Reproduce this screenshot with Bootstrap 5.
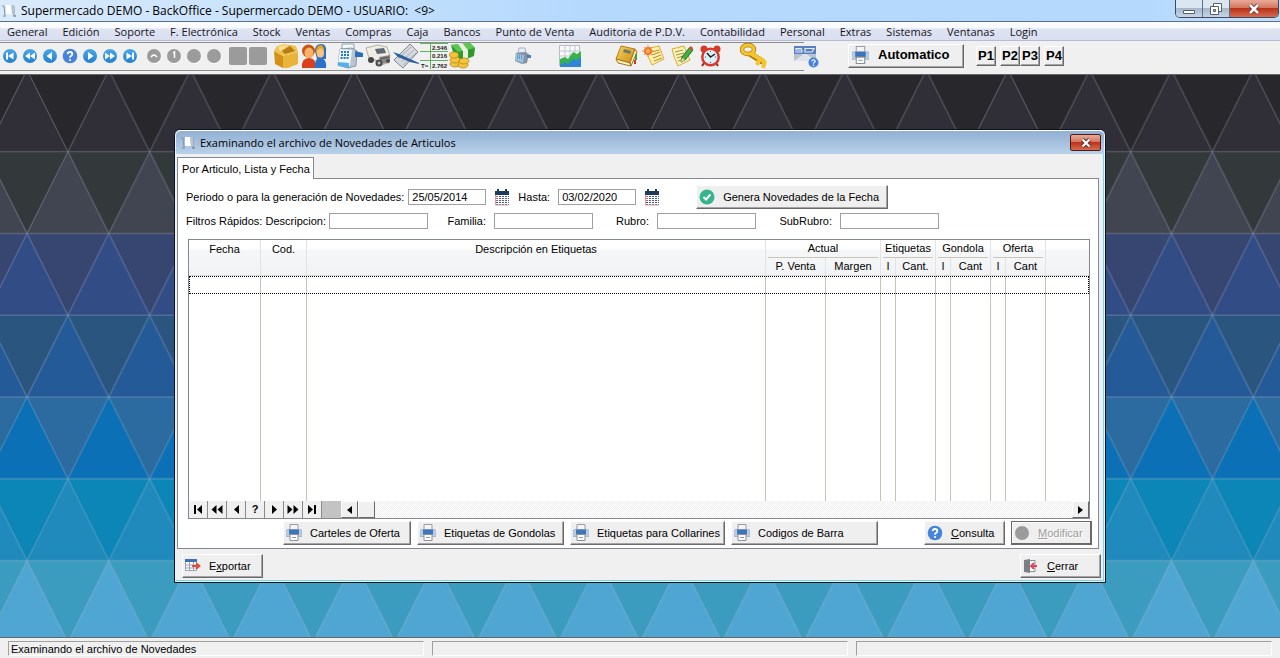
<!DOCTYPE html>
<html lang="es">
<head>
<meta charset="utf-8">
<meta name="viewport" content="width=device-width, initial-scale=1">
<title>Supermercado DEMO - BackOffice</title>
<link href="https://cdn.jsdelivr.net/npm/bootstrap@5.3.0/dist/css/bootstrap.min.css" rel="stylesheet">
<style>
  body { font-family: "Liberation Sans", Arial, sans-serif; font-size: 11px; line-height: 16px; color: #000; background: #f0f0f0; }
  svg { display: block; flex-shrink: 0; }
  button { font: inherit; color: inherit; }
  .segoe { font-family: "Open Sans", "Noto Sans", sans-serif; font-size: 12px; }
  .segoe.tight { font-size: 11px; }

  .app-title { height: 22px; background: linear-gradient(90deg, #d9eafb, #b5d9fd 45%, #b5d9fd 90%, #c4dff8); border-bottom: 1px solid #5b6f86; padding-left: 1px; }
  .win-btns { height: 18px; border: 1px solid #3c4a5c; border-top: 0; border-radius: 0 0 5px 5px; overflow: hidden; margin-right: 1px; }
  .win-btns button { border: 0; border-right: 1px solid #5f7187; padding: 0; width: 27px; background: linear-gradient(#dbe6f1 45%, #a7b8ca 50%, #c4d6e8); display: flex; align-items: center; justify-content: center; }
  .win-btns .x-close { width: 48px; border: 0; }
  .x-close { background: linear-gradient(#e6a595 5%, #d4765f 45%, #b93319 50%, #d86a50) !important; }

  .app-menu { height: 19px; gap: 15px; padding-left: 7px; background: linear-gradient(#f9fbfe 30%, #dfe4f2 40%, #dadff1); border-bottom: 1px solid #b7bdd0; white-space: nowrap; overflow: hidden; }
  .app-menu a { color: #15151c; text-decoration: none; line-height: 19px; }

  .app-tools { height: 34px; padding: 1px 0 5px; border-bottom: 1px solid #666;
    background: linear-gradient(#8c8c8c, #8c8c8c) 0 1px / 804px 1px no-repeat, linear-gradient(#8c8c8c, #8c8c8c) 0 29px / 804px 1px no-repeat, #f0f0f0; }
  .tool { border: 0; background: none; padding: 0; width: 28px; height: 27px; display: flex; align-items: center; justify-content: center; flex-shrink: 0; }
  .tool.slim { width: 20px; }

  .bevel { border: 1px solid; border-color: #fff #696969 #696969 #fff; box-shadow: inset -1px -1px #a5a5a5; background: #efefef; height: 24px; padding: 0 2px 1px; display: flex; align-items: center; gap: 8px; white-space: nowrap; color: #000; }
  .bevel:disabled { border-color: #696969; box-shadow: inset -1px -1px #696969, inset 1px 1px #fff; color: #9c9c9c; text-shadow: 1px 1px #fff; }
  .bevel.auto { width: 116px; font-size: 13px; font-weight: bold; padding-left: 3px; }
  .bevel.auto svg { margin-right: 1px; }
  .bevel.pkey { width: 20px; height: 20px; font-size: 13px; font-weight: bold; justify-content: center; padding: 0; }
  .w-a { width: 81px; } .w-b { width: 128px; } .w-c { width: 147px; } .w-d { width: 155px; } .w-e { width: 192px; margin-left: 28px; }

  .desktop { padding: 54px 174px; }
  .dlg { border: 1px solid #0c1420; border-radius: 6px 6px 0 0; background: #f0f0f0; box-shadow: inset 0 0 0 1px #eaf4fd, inset -1px -1px 0 1px #6fd7ee; padding: 0 2px 4px; }
  .dlg-title { height: 24px; margin: 0 -1px; padding: 0 3px 0 4px; border-radius: 5px 5px 0 0; border-top: 1px solid #fff; background: linear-gradient(#92b0d2, #b9d1ea); }
  .dlg-title .x-close { width: 31px; height: 17px; border: 1px solid #4e1b18; border-radius: 2px; padding: 0; display: flex; align-items: center; justify-content: center; }
  .tab-head { height: 22px; margin-top: 3px; padding: 0 3px 0 4px; border: 1px solid #828790; border-bottom: 0; background: #fff; line-height: 22px; position: relative; margin-bottom: -1px; display: inline-block; color: #000; text-decoration: none; vertical-align: top; }
  .pane { border: 1px solid #828790; background: #fff; padding: 6px 6px 3px 8px; margin-right: 4px; }
  .box { border: 1px solid #a0a0a0; border-radius: 0; background: #fff; height: 16px; padding: 0 3px; font: inherit; width: 99px; color: #000; }
  .box.day { width: 78px; }
  .icon-btn { border: 0; padding: 0; background: none; }
  .filters { display: grid; grid-template-columns: 143px 99px 66px 99px 64px 99px 84px 99px; align-items: center; }
  .filters label ~ label { text-align: right; padding-right: 8px; }

  .grid-box { border: 1px solid #828790; margin: 10px 2px 0; }
  .grid-tab { table-layout: fixed; width: 100%; border-collapse: separate; border-spacing: 0; }
  .grid-tab th { font-weight: normal; text-align: center; padding: 0; line-height: 18px; vertical-align: top; border-right: 1px solid #e2e3e6; white-space: nowrap; overflow: hidden; }
  .grid-tab th[aria-label] { border-right: 0; }
  .grid-tab thead { background: linear-gradient(#fff 25%, #f6f7f9 28%, #f1f2f4); }
  .grid-tab thead span { display: block; margin: 0 2px; line-height: 17px; border-bottom: 1px solid #c9c6b8; }
  .grid-tab thead tr:last-child th { border-bottom: 1px solid #d5d5d5; line-height: 17px; height: 18px; }
  .grid-tab thead th[rowspan] { border-bottom: 1px solid #d5d5d5; }
  .grid-tab td { padding: 0; border-right: 1px solid #c6c3b6; }
  .grid-tab td:last-child { border-right: 0; }
  .cur-row td { height: 18px; }
  .cur-row { outline: 1px dotted #000; outline-offset: -1px; }
  .void-row td { height: 207px; }
  .navrow { height: 17px; }
  .navrow button { width: 19px; border: 0; border-right: 1px solid #8a8a8a; background: #f0f0f0; padding: 0; display: flex; align-items: center; justify-content: center; font-weight: bold; line-height: 17px; }
  .navrow .sb { width: 17px; border: 1px solid; border-color: #fff #696969 #696969 #fff; }
  .navrow .gap-gray { width: 19px; background: #c3c3c3; }
  .navrow .track { background: repeating-conic-gradient(#fff 0 25%, #efefef 0 50%) 0 0 / 2px 2px; }
  .actions { gap: 6px; margin-top: 2px; }
  .dlg-foot { padding: 5px 2px 0 5px; }

  .stat { padding: 3px 8px 2px; gap: 8px; border-top: 1px solid #666; height: 21px; }
  .stat div { flex: 1 1 0; height: 15px; line-height: 14px; padding-left: 2px; border: 1px solid; border-color: #a0a0a0 #fff #fff #a0a0a0; white-space: nowrap; }
</style>
</head>
<body class="min-vh-100 d-flex flex-column">

<svg width="0" height="0" class="position-absolute" aria-hidden="true">
  <defs>
    <linearGradient id="blu" x1="0" y1="0" x2="0" y2="1"><stop offset="0" stop-color="#4aa8e8"/><stop offset="1" stop-color="#1f7fd0"/></linearGradient>
    <linearGradient id="gld" x1="0" y1="0" x2="1" y2="1"><stop offset="0" stop-color="#f8d765"/><stop offset="1" stop-color="#c98a10"/></linearGradient>
    <symbol id="cart" viewBox="0 0 16 16"><path d="M1 3h2l1 9M13 3v10h2" fill="none" stroke="#8592a0"/><path d="M5 2h5l1 9H5z" fill="#fff"/><path d="M10 2h3v9h-2z" fill="#b9c4d1"/><path d="M2 13h3M12 13h3" stroke="#76828f"/></symbol>
    <symbol id="print" viewBox="1 .5 16 17"><path d="M5 1h8v5H5z" fill="#f4f4f4" stroke="#9a9fa6"/><path d="M1 8q0-2 2-2h12q2 0 2 2v5H1z" fill="#b9cce4" stroke="#a8b8cc"/><path d="M4 6h10v5H4z" fill="#3d75ba"/><path d="M5 11h8v6H5z" fill="#fff" stroke="#8b9097"/><path d="M7 14h4" stroke="#999"/></symbol>
    <symbol id="cal" viewBox="0 0 16 17"><path d="M1 2h14v4H1z" fill="#1b3a5c"/><path d="M4 0v3M12 0v3" stroke="#1b3a5c" stroke-width="2"/><path d="M1 6h14v10H1z" fill="#fff"/><path d="M2 7.500h13M2 9.500h13M2 11.500h13M2 13.500h13M2 15.500h13" stroke="#4c5f80" stroke-dasharray="2 1"/><path d="M1.500 6v10h13" fill="none" stroke="#d9a0a8"/><path d="M2 7.500h2M2 9.500h2M2 11.500h2" stroke="#cf5a68"/></symbol>
    <symbol id="help" viewBox="0 0 16 16"><circle cx="8" cy="8" r="7.300" fill="#4683dc"/><path d="M5.600 6.200Q5.800 4 8 4t2.300 2Q10.300 7.200 9 8T8 9.700" fill="none" stroke="#fff" stroke-width="1.800"/><circle cx="8" cy="12" r="1.100" fill="#fff"/></symbol>
  </defs>
</svg>

<header class="app-title d-flex align-items-center segoe">
  <svg width="16" height="16"><use href="#cart"/></svg>
  <span class="ms-1 flex-grow-1 text-nowrap">Supermercado DEMO - BackOffice - Supermercado DEMO - USUARIO: &nbsp;&lt;9&gt;</span>
  <div class="win-btns d-flex align-self-start">
    <button type="button" aria-label="Minimizar"><svg width="14" height="14"><path d="M1.500 8.500h11v3h-11z" fill="#fff" stroke="#555f6e"/></svg></button>
    <button type="button" aria-label="Restaurar"><svg width="14" height="14"><path d="M4.500 1.500h8v8h-8z" fill="#fff" stroke="#555f6e"/><path d="M1.500 4.500h8v8h-8z" fill="#fff" stroke="#555f6e"/><path d="M4.500 7.500h2v2h-2z" fill="#a7b8ca" stroke="#555f6e"/></svg></button>
    <button type="button" class="x-close" aria-label="Cerrar ventana"><svg width="14" height="12"><path d="M3 2l8 8M11 2l-8 8" stroke="#5b2a2a" stroke-width="4"/><path d="M3 2l8 8M11 2l-8 8" stroke="#fff" stroke-width="2.500"/></svg></button>
  </div>
</header>

<nav class="app-menu d-flex segoe tight">
  <a href="#">General</a><a href="#">Edición</a><a href="#">Soporte</a><a href="#">F. Electrónica</a><a href="#">Stock</a><a href="#">Ventas</a><a href="#">Compras</a><a href="#">Caja</a><a href="#">Bancos</a><a href="#">Punto de Venta</a><a href="#">Auditoria de P.D.V.</a><a href="#">Contabilidad</a><a href="#">Personal</a><a href="#">Extras</a><a href="#">Sistemas</a><a href="#">Ventanas</a><a href="#">Login</a>
</nav>

<div class="app-tools d-flex align-items-center" role="toolbar" aria-label="Herramientas">
  <button type="button" class="tool slim" aria-label="Primero"><svg width="16" height="16"><circle cx="8" cy="8" r="7" fill="url(#blu)"/><path d="M4 4.500h2v7H4zM11.500 4.500v7L6 8z" fill="#fff"/></svg></button>
  <button type="button" class="tool slim" aria-label="Página anterior"><svg width="16" height="16"><circle cx="8" cy="8" r="7" fill="url(#blu)"/><path d="M8 4.500v7L3 8zM13 4.500v7L8 8z" fill="#fff"/></svg></button>
  <button type="button" class="tool slim" aria-label="Anterior"><svg width="16" height="16"><circle cx="8" cy="8" r="7" fill="url(#blu)"/><path d="M10 4v8L4.500 8z" fill="#fff"/></svg></button>
  <button type="button" class="tool slim" aria-label="Ayuda"><svg width="16" height="16"><use href="#help"/></svg></button>
  <button type="button" class="tool slim" aria-label="Siguiente"><svg width="16" height="16"><circle cx="8" cy="8" r="7" fill="url(#blu)"/><path d="M6 4v8l5.500-4z" fill="#fff"/></svg></button>
  <button type="button" class="tool slim" aria-label="Página siguiente"><svg width="16" height="16"><circle cx="8" cy="8" r="7" fill="url(#blu)"/><path d="M8 4.500v7L13 8zM3 4.500v7L8 8z" fill="#fff"/></svg></button>
  <button type="button" class="tool slim" aria-label="Último"><svg width="16" height="16"><circle cx="8" cy="8" r="7" fill="url(#blu)"/><path d="M10 4.500h2v7h-2zM4.500 4.500v7L10 8z" fill="#fff"/></svg></button>
  <button type="button" class="tool slim ms-1" aria-label="Insertar"><svg width="16" height="16"><circle cx="8.800" cy="8.800" r="7" fill="#fff"/><circle cx="8" cy="8" r="7" fill="#9b9b9b"/><path d="M5 9q3-4 6 0" fill="none" stroke="#fff" stroke-width="1.500"/></svg></button>
  <button type="button" class="tool slim" aria-label="Cambiar"><svg width="16" height="16"><circle cx="8.800" cy="8.800" r="7" fill="#fff"/><circle cx="8" cy="8" r="7" fill="#9b9b9b"/><path d="M7 5l1.500-1v6" fill="none" stroke="#fff" stroke-width="1.500"/></svg></button>
  <button type="button" class="tool slim" aria-label="Borrar"><svg width="16" height="16"><circle cx="8.800" cy="8.800" r="7" fill="#fff"/><circle cx="8" cy="8" r="7" fill="#9b9b9b"/></svg></button>
  <button type="button" class="tool slim" aria-label="Deshacer"><svg width="16" height="16"><circle cx="8.800" cy="8.800" r="7" fill="#fff"/><circle cx="8" cy="8" r="7" fill="#9b9b9b"/></svg></button>
  <button type="button" class="tool slim ms-1" aria-label="Guardar"><svg width="18" height="18"><rect width="18" height="18" rx="2" fill="#9b9b9b"/></svg></button>
  <button type="button" class="tool slim" aria-label="Cancelar"><svg width="18" height="18"><rect width="18" height="18" rx="2" fill="#9b9b9b"/></svg></button>
  <button type="button" class="tool ms-1" aria-label="Artículos"><svg width="26" height="26"><path d="M1 8l9 5v12L2 21z" fill="#d2921a"/><path d="M10 13l15-4v12l-10 4h-5z" fill="#e8b43a"/><path d="M1 8l3-5 8-2 3 1 3 0 5 1 2 6-15 4z" fill="#efc250"/><path d="M5 4l8-2 2 1-8 5z" fill="#fae09a"/><path d="M9 8l8-5 5 5-10 3z" fill="#b87c14"/></svg></button>
  <button type="button" class="tool" aria-label="Clientes"><svg width="26" height="26"><circle cx="7.500" cy="8" r="6.500" fill="#c9560f"/><ellipse cx="8" cy="10" rx="4.500" ry="5.500" fill="#f7b26a"/><path d="M1 25q-1-10 7-10t6 10z" fill="#d9401c"/><path d="M14 8q0-7 6-7t5 8l0 7h-9z" fill="#2f6fc0"/><path d="M15 9q0-7 5-7 3 1 3 5l-6 8z" fill="#e9a21d"/><ellipse cx="19.500" cy="10" rx="3.500" ry="4.500" fill="#f9c384"/><path d="M14 25q-1-10 5-10 7 0 6 10z" fill="#2a72cc"/></svg></button>
  <button type="button" class="tool ms-2" aria-label="Caja registradora"><svg width="26" height="26"><path d="M5 1h12v5H5z" fill="#f5f8fb" stroke="#8ea2b6"/><path d="M3 6l12-1 5 3-1 15-8 2-10-3z" fill="#b9c4ce" stroke="#6f8ba6" stroke-width=".8"/><path d="M3 6l12 1-2 16-12-3z" fill="#eff6fc"/><path d="M4 9h9M4 12h8M3.500 15h8" stroke="#2e76c4" stroke-width="2" stroke-dasharray="2 1"/><path d="M1 19l11 1v5L1 23z" fill="#5bb0ea"/><path d="M18 8l8 2v4h-8z" fill="#2b6fb9"/></svg></button>
  <button type="button" class="tool" aria-label="Proveedores"><svg width="26" height="26"><path d="M12 7l12 4v9l-9 3-6-6z" fill="#b3aea2"/><path d="M1 5l12-3 9 2 3 9-2 3-10 2-9-3z" fill="#efece2" stroke="#9a968b" stroke-width=".7"/><path d="M10 6l9-1 2 5-9 1z" fill="#5b6875"/><path d="M14 14l11-2v6l-9 3z" fill="#8a8882"/><path d="M15 16l9-2" stroke="#4d4d4d"/><circle cx="6" cy="17" r="3" fill="#444"/><circle cx="14" cy="20" r="3.500" fill="#4b4b4b"/><circle cx="14" cy="20" r="1.500" fill="#bbb"/><circle cx="23" cy="18" r="2" fill="#4b4b4b"/></svg></button>
  <button type="button" class="tool" aria-label="Cheques"><svg width="26" height="26"><path d="M1 17L17 1l8 8-15 16z" fill="#d6dade" stroke="#7d848c"/><path d="M5 16L18 4M8 19L21 7M10 22L23 10" stroke="#a5acb4"/><path d="M0 9l6 2 20 9v1l-9-2L5 14z" fill="#2c5f9e"/></svg></button>
  <button type="button" class="tool" aria-label="Totales"><svg width="28" height="26"><path d="M0 .5h28M0 8.500h28M0 17.500h28M10.500 0v26" stroke="#5db560"/><g font-family="Liberation Sans" font-size="6" font-weight="bold" fill="#222"><text x="12" y="7">2.546</text><text x="12" y="15">0.216</text><text x="1" y="25">T=</text><text x="12" y="25">2.762</text></g></svg></button>
  <button type="button" class="tool" aria-label="Pagos"><svg width="26" height="26"><path d="M2 2l19-2 5 5-1 8-12 5L4 9z" fill="#2f9a2b"/><path d="M2 2l19-2 5 5-17 4z" fill="#5cc653"/><path d="M9 1l5 0 5 6v8l-5 2V8z" fill="#e8f0df"/><g fill="#f2c53a" stroke="#b57d10" stroke-width=".7"><ellipse cx="6" cy="21" rx="5" ry="3"/><ellipse cx="6" cy="17" rx="5" ry="3"/><ellipse cx="5" cy="12" rx="4.500" ry="3"/><ellipse cx="14" cy="22" rx="5" ry="3"/><ellipse cx="15" cy="18" rx="5" ry="3"/></g></svg></button>
  <span class="px-3 me-1"></span>
  <button type="button" class="tool slim me-1" aria-label="Punto de venta"><svg width="18" height="18"><path d="M6 1h6l1 5H5z" fill="#e6eef5" stroke="#8a98a6" stroke-width=".7"/><path d="M3 6l9-1 4 2-2 9-5 1-7-3z" fill="#8493a2"/><path d="M3 7l8 1-1 8-8-3z" fill="#9cc3e4"/><path d="M4 9h5M4 11h5" stroke="#396f9f" stroke-dasharray="1 1"/><path d="M14 8h4v3h-4z" fill="#4c82b8"/></svg></button>
  <span class="px-2 me-1"></span>
  <button type="button" class="tool" aria-label="Estadísticas"><svg width="22" height="22"><path d="M.5.500h20v20H.5z" fill="#fafafa" stroke="#b5b9c6"/><path d="M6 0v20M11 0v20M16 0v20M0 6h21M0 11h21" stroke="#c3c6d2"/><path d="M1 17l5-3 3 3 6-6 3 1 4-2v12H1z" fill="#2d86d8"/><path d="M1 14l5-2 3 2 5-7 4 2 4-3v6l-4 3-4-1-5 5-3-2-5 3z" fill="#38b24a"/></svg></button>
  <span class="px-2 me-2 ms-1"></span>
  <button type="button" class="tool" aria-label="Libro"><svg width="24" height="24"><path d="M7 2l14 3-5 14-14-4z" fill="url(#gld)" stroke="#b5811a"/><path d="M2 15l2 4 13 3-1-3zM16 19l5-14 2 3-6 14z" fill="#fbf2cc" stroke="#a97516"/><path d="M10 5l7 2-1 3-7-2z" fill="#6f7b62"/><path d="M22 10v6" stroke="#43a047" stroke-width="2"/><path d="M21 16v4" stroke="#d5331f" stroke-width="2"/></svg></button>
  <button type="button" class="tool" aria-label="Nota nueva"><svg width="24" height="24"><path d="M4 5l13-3 5 13-12 6q-4-7-6-16z" fill="#fdf0ac" stroke="#dfa93a"/><path d="M10 8l7-2M10 11l8-3M11 14l8-3M12 17l8-3" stroke="#b58a2a"/><circle cx="6" cy="7" r="4" fill="#ee6a1e"/><path d="M6 1v12M0 7h12M2 3l8 8M10 3l-8 8" stroke="#f28b4a"/><circle cx="6" cy="7" r="2" fill="#fbb04a"/></svg></button>
  <button type="button" class="tool" aria-label="Editar nota"><svg width="24" height="24"><path d="M2 5l12-3 6 14-12 6q-4-8-6-17z" fill="#fdf3b8" stroke="#d8a838"/><path d="M5 8l8-2M6 11l8-2M7 14l6-2M8 17l8-3" stroke="#a9913d"/><path d="M11 18l1-5 8-10 3 3-8 10z" fill="#42b03e" stroke="#1f7222"/><path d="M19 4l2-2 2 2-1 3z" fill="#e34a36"/><path d="M11 18l1-4 3 2z" fill="#f5ddb0"/></svg></button>
  <button type="button" class="tool" aria-label="Alarma"><svg width="24" height="24"><circle cx="6" cy="5" r="3.500" fill="#d23b2c"/><circle cx="19" cy="5" r="3.500" fill="#d23b2c"/><path d="M6 19l-2 3M18 19l2 3" stroke="#9b251b" stroke-width="2"/><circle cx="12.500" cy="13" r="9.500" fill="#d8392b"/><circle cx="12.500" cy="13" r="7" fill="#d9f0fa"/><path d="M9 9l3.500 4L17 10" fill="none" stroke="#222" stroke-width="1.500"/><path d="M12.500 7v1M12.500 18v1M7 13h1M17 13h1" stroke="#555"/></svg></button>
  <button type="button" class="tool ms-3" aria-label="Claves"><svg width="28" height="26"><path d="M9 10l14 9" stroke="#b07708" stroke-width="6"/><ellipse cx="8" cy="6.500" rx="6" ry="4.500" fill="none" stroke="#b07708" stroke-width="4.500"/><path d="M10 10l15 9M19 17l-2 5M25 18l-2 7" stroke="#f5c62c" stroke-width="4"/><ellipse cx="8" cy="6.500" rx="6" ry="4.500" fill="none" stroke="#f5c62c" stroke-width="3"/></svg></button>
  <button type="button" class="tool ms-4" aria-label="Consulta SQL"><svg width="26" height="24"><path d="M1 9h22v8H1z" fill="#b9c2cf"/><path d="M1 17l11-8 11 8z" fill="#dfe4ec"/><path d="M1 2h22v8H1z" fill="#5a7fc0"/><path d="M9 4.500H3V6h6v2H2M12 4.500h9l-2 3.500h-7z" fill="none" stroke="#e6ecf6" stroke-width="1.200"/><svg x="15" y="13" width="11" height="11"><use href="#help"/></svg></svg></button>
  <span class="px-2 me-2 ms-1"></span>
  <button type="button" class="bevel auto"><svg width="17" height="18"><use href="#print"/></svg>Automatico</button>
  <span class="px-1 me-1"></span>
  <button type="button" class="bevel pkey">P1</button>
  <button type="button" class="bevel pkey ms-1">P2</button>
  <button type="button" class="bevel pkey">P3</button>
  <button type="button" class="bevel pkey ms-1">P4</button>
</div>

<main class="desktop flex-grow-1 position-relative">
  <!-- triangle wallpaper, one 82px band per colour pair -->
  <svg class="position-absolute top-0 start-0 w-100 h-100" aria-hidden="true">
    <defs>
      <pattern id="tri" width="81.750" height="572.250" patternUnits="userSpaceOnUse" patternTransform="translate(27 -5)">
        <rect width="82" height="82" fill="#28272c"/>
        <rect y="81.750" width="82" height="82" fill="#33383b"/>
        <rect y="163.500" width="82" height="82" fill="#364671"/>
        <rect y="245.250" width="82" height="82" fill="#29557f"/>
        <rect y="327" width="82" height="82" fill="#2b6ba0"/>
        <rect y="408.750" width="82" height="82" fill="#0b86b6"/>
        <rect y="490.500" width="82" height="82" fill="#3b9cbf"/>
        <g stroke="#b0bccd" stroke-opacity=".35" stroke-width="1">
          <path d="M0 0L-40.875 81.750H40.875zM81.750 0L40.875 81.750H122.625z" fill="#302f38"/>
          <path d="M40.875 81.750L0 163.500H81.750z" fill="#414552"/>
          <path d="M0 163.500L-40.875 245.250H40.875zM81.750 163.500L40.875 245.250H122.625z" fill="#324c86"/>
          <path d="M40.875 245.250L0 327H81.750z" fill="#255a98"/>
          <path d="M0 327L-40.875 408.750H40.875zM81.750 327L40.875 408.750H122.625z" fill="#0b70b5"/>
          <path d="M40.875 408.750L0 490.500H81.750z" fill="#218abc"/>
          <path d="M0 490.500L-40.875 572.250H40.875zM81.750 490.500L40.875 572.250H122.625z" fill="#50a6d2"/>
        </g>
      </pattern>
    </defs>
    <rect width="100%" height="100%" fill="url(#tri)"/>
  </svg>

  <section class="dlg position-relative">
    <div class="dlg-title d-flex align-items-center segoe tight">
      <svg width="16" height="16"><use href="#cart"/></svg>
      <span class="ms-1 flex-grow-1">Examinando el archivo de Novedades de Articulos</span>
      <button type="button" class="x-close" aria-label="Cerrar"><svg width="12" height="10"><path d="M2.500 1.500l7 7M9.500 1.500l-7 7" stroke="#5b2a2a" stroke-width="4"/><path d="M2.500 1.500l7 7M9.500 1.500l-7 7" stroke="#fff" stroke-width="2.200"/></svg></button>
    </div>
    <a href="#" class="tab-head">Por Articulo, Lista y Fecha</a>
    <div class="pane">
      <div class="d-flex align-items-center">
        <label for="desde">Periodo o para la generación de Novedades:</label>
        <input id="desde" class="box day ms-1" value="25/05/2014">
        <button type="button" class="icon-btn mx-2" aria-label="Elegir fecha inicial"><svg width="16" height="17"><use href="#cal"/></svg></button>
        <label for="hasta">Hasta:</label>
        <input id="hasta" class="box day ms-2" value="03/02/2020">
        <button type="button" class="icon-btn mx-2" aria-label="Elegir fecha final"><svg width="16" height="17"><use href="#cal"/></svg></button>
        <button type="button" class="bevel w-e"><svg width="16" height="16"><circle cx="8" cy="8" r="7.500" fill="#35b58c"/><path d="M4.500 8l2.500 2.500 4.500-5" fill="none" stroke="#fff" stroke-width="2"/></svg>Genera Novedades de la Fecha</button>
      </div>
      <div class="filters mt-1">
        <label for="fdesc">Filtros Rápidos: Descripcion:</label><input id="fdesc" class="box">
        <label for="ffam">Familia:</label><input id="ffam" class="box">
        <label for="frub">Rubro:</label><input id="frub" class="box">
        <label for="fsub">SubRubro:</label><input id="fsub" class="box">
      </div>

      <div class="grid-box">
        <table class="grid-tab">
          <colgroup><col style="width:72px"><col style="width:46px"><col><col style="width:60px"><col style="width:55px"><col style="width:15px"><col style="width:40px"><col style="width:15px"><col style="width:40px"><col style="width:15px"><col style="width:40px"><col style="width:43px"></colgroup>
          <thead>
            <tr><th rowspan="2">Fecha</th><th rowspan="2">Cod.</th><th rowspan="2">Descripción en Etiquetas</th><th colspan="2"><span>Actual</span></th><th colspan="2"><span>Etiquetas</span></th><th colspan="2"><span>Gondola</span></th><th colspan="2"><span>Oferta</span></th><th rowspan="2" aria-label="Sin título"></th></tr>
            <tr><th>P. Venta</th><th>Margen</th><th>I</th><th>Cant.</th><th>I</th><th>Cant</th><th>I</th><th>Cant</th></tr>
          </thead>
          <tbody>
            <tr class="cur-row"><td></td><td></td><td></td><td></td><td></td><td></td><td></td><td></td><td></td><td></td><td></td><td></td></tr>
            <tr class="void-row"><td></td><td></td><td></td><td></td><td></td><td></td><td></td><td></td><td></td><td></td><td></td><td></td></tr>
          </tbody>
        </table>
        <div class="navrow d-flex">
          <button type="button" aria-label="Primero"><svg width="10" height="9"><path d="M1 0h2v9H1zM9 0v9L4 4.500z"/></svg></button>
          <button type="button" aria-label="Página anterior"><svg width="12" height="9"><path d="M5.500 0v9L.5 4.500zM11.500 0v9l-5-4.500z"/></svg></button>
          <button type="button" aria-label="Anterior"><svg width="5" height="9"><path d="M5 0v9L0 4.500z"/></svg></button>
          <button type="button">?</button>
          <button type="button" aria-label="Siguiente"><svg width="5" height="9"><path d="M0 0v9l5-4.500z"/></svg></button>
          <button type="button" aria-label="Página siguiente"><svg width="12" height="9"><path d="M.5 0v9l5-4.500zM6.500 0v9l5-4.500z"/></svg></button>
          <button type="button" aria-label="Último"><svg width="10" height="9"><path d="M7 0h2v9H7zM1 0v9l5-4.500z"/></svg></button>
          <span class="gap-gray"></span>
          <button type="button" class="sb" aria-label="Desplazar a la izquierda"><svg width="5" height="8"><path d="M5 0v8L0 4z"/></svg></button>
          <button type="button" class="sb" aria-label="Barra de desplazamiento"></button>
          <span class="track flex-grow-1"></span>
          <button type="button" class="sb" aria-label="Desplazar a la derecha"><svg width="5" height="8"><path d="M0 0v8l5-4z"/></svg></button>
        </div>
      </div>

      <div class="actions d-flex justify-content-end">
        <button type="button" class="bevel w-b"><svg width="16" height="17"><use href="#print"/></svg>Carteles de Oferta</button>
        <button type="button" class="bevel w-c"><svg width="16" height="17"><use href="#print"/></svg>Etiquetas de Gondolas</button>
        <button type="button" class="bevel w-d"><svg width="16" height="17"><use href="#print"/></svg>Etiquetas para Collarines</button>
        <button type="button" class="bevel w-c me-4"><svg width="16" height="17"><use href="#print"/></svg>Codigos de Barra</button>
        <button type="button" class="bevel w-a ms-3"><svg width="16" height="16"><use href="#help"/></svg><span><u>C</u>onsulta</span></button>
        <button type="button" class="bevel w-a" disabled><svg width="16" height="16"><circle cx="8" cy="8" r="7" fill="#9b9b9b"/></svg><span><u>M</u>odificar</span></button>
      </div>
    </div>
    <div class="dlg-foot d-flex justify-content-between">
      <button type="button" class="bevel w-a"><svg width="16" height="16"><path d="M.5 1.500h11v11H.5z" fill="#fff" stroke="#9aa4b5"/><path d="M0 1h12v3H0z" fill="#3f72b5"/><path d="M4.500 4v9M8.500 4v9M0 7h12M0 10h12" stroke="#9aa4b5"/><path d="M7 7h4V4l5 4-5 4V9H7z" fill="#dc4f3f"/></svg><span>E<u>x</u>portar</span></button>
      <button type="button" class="bevel w-a"><svg width="16" height="16"><path d="M6 2.500h6v11H6" fill="#fff" stroke="#8d8d8d"/><path d="M1 2l6-1v14l-6-1z" fill="#7d7f86"/><path d="M14 8H9M11 5L8 8l3 3" fill="none" stroke="#dd4458" stroke-width="1.800"/></svg><span><u>C</u>errar</span></button>
    </div>
  </section>
</main>

<footer class="stat d-flex"><div>Examinando el archivo de Novedades</div><div></div><div></div></footer>

<script src="https://cdn.jsdelivr.net/npm/bootstrap@5.3.0/dist/js/bootstrap.bundle.min.js"></script>
</body>
</html>
